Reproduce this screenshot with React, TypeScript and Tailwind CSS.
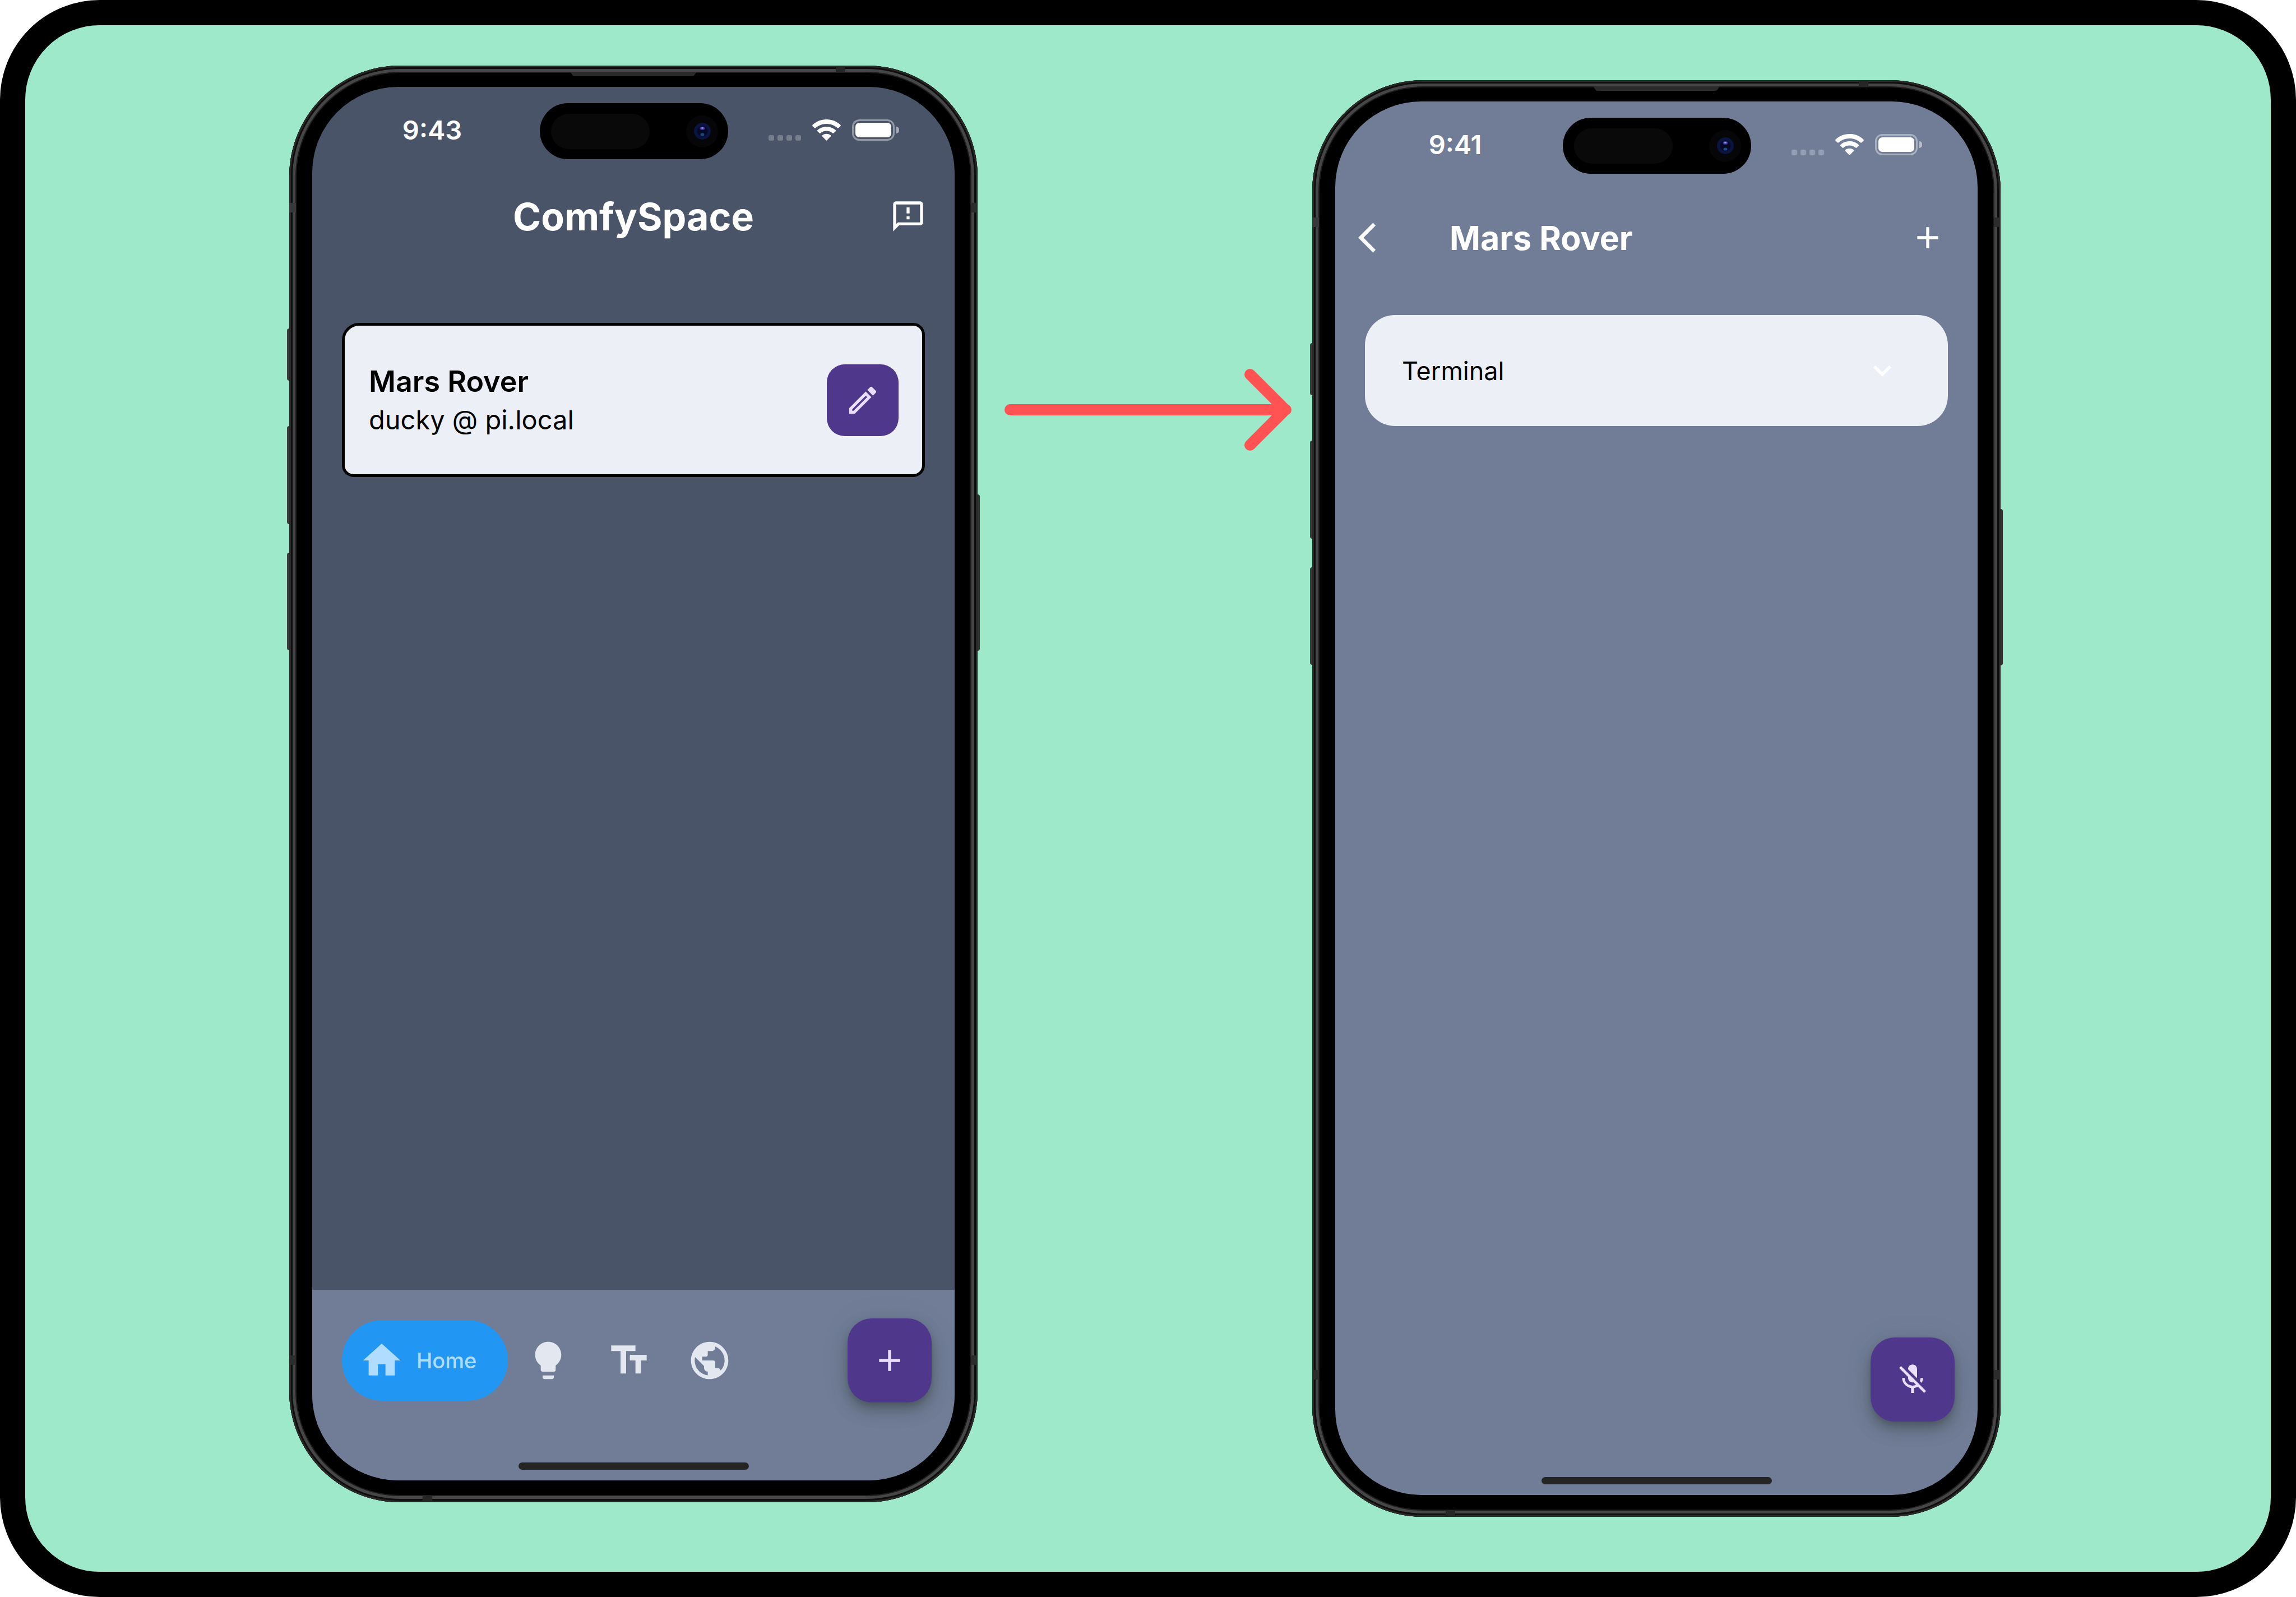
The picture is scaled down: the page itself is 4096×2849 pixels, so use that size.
import type { ReactNode } from "react";
import {
  MdAdd,
  MdArrowBackIos,
  MdExpandMore,
  MdHome,
  MdLightbulb,
  MdMicOff,
  MdOutlineEdit,
  MdOutlineFeedback,
  MdPublic,
  MdTextFields,
} from "react-icons/md";

function StatusBar({ time }: { time: string }) {
  return (
    <div className="grid h-[158px] shrink-0 grid-cols-[406fr_336fr_404fr] items-center">
      <span className="pb-1.5 pl-[22px] text-center text-[47px] leading-none font-semibold">{time}</span>
      <div className="flex h-[100px] items-center justify-between rounded-full bg-black pr-[18px] pl-5">
        <span className="h-[63px] w-[176px] rounded-full bg-[#090909]" />
        <span className="flex size-[57px] items-center justify-center rounded-full bg-[#060507]">
          <svg viewBox="0 0 30 30" className="size-[30px]" aria-hidden="true">
            <circle cx="15" cy="15" r="15" fill="#0a1440" />
            <circle cx="15" cy="15" r="9.5" fill="#060828" />
            <ellipse cx="15" cy="10" rx="4.5" ry="3" fill="#3a3698" />
            <ellipse cx="15" cy="9.5" rx="2.2" ry="1.4" fill="#8d89d8" />
            <ellipse cx="15" cy="21" rx="3.5" ry="2.6" fill="#174a80" />
          </svg>
        </span>
      </div>
      <div className="flex items-end justify-end gap-5 pr-[99px] pb-1">
        <span className="flex gap-1.5">
          <i className="size-2.5 rounded-[3px] bg-white/25" />
          <i className="size-2.5 rounded-[3px] bg-white/25" />
          <i className="size-2.5 rounded-[3px] bg-white/25" />
          <i className="size-2.5 rounded-[3px] bg-white/25" />
        </span>
        <svg viewBox="0 0 51 38" className="h-[38px] w-[51px]" fill="#fff" aria-hidden="true">
          <path d="M25.5 0C35.2 0 44 3.700 50.300 9.700C51 10.400 51 11.300 50.400 12L47 15.300C46.400 15.900 45.600 15.900 45 15.300C39.900 10.600 33 7.900 25.500 7.900S11.100 10.600 6 15.300C5.400 15.900 4.600 15.900 4 15.300L.6 12C0 11.300 0 10.400 .7 9.700C7 3.700 15.800 0 25.500 0Z" />
          <path d="M25.500 12.900C31.700 12.900 37.300 15.200 41.500 19C42.200 19.700 42.200 20.500 41.600 21.200L38.200 24.500C37.600 25.100 36.800 25.100 36.200 24.600C33.400 22.100 29.600 20.600 25.500 20.600S17.600 22.100 14.800 24.600C14.200 25.100 13.400 25.100 12.800 24.500L9.400 21.200C8.800 20.500 8.800 19.700 9.500 19C13.700 15.200 19.300 12.900 25.500 12.900Z" />
          <path d="M25.500 25.700C28.400 25.700 31 26.700 33 28.300C33.700 28.900 33.700 29.700 33.100 30.300L26.500 37.100C25.900 37.800 25.100 37.800 24.500 37.100L17.900 30.300C17.300 29.700 17.300 28.900 18 28.300C20 26.700 22.600 25.700 25.500 25.700Z" />
        </svg>
        <span className="flex items-center gap-[3px]">
          <span className="h-[38px] w-[76px] rounded-[13px] border-[3px] border-white/40 p-[3px]">
            <span className="block h-full rounded-[7px] bg-white" />
          </span>
          <span className="h-3 w-[5px] rounded-r-full bg-white/50" />
        </span>
      </div>
    </div>
  );
}

function HomeIndicator() {
  return <div className="mx-auto mb-[19px] h-[13px] w-[411px] shrink-0 rounded-full bg-[#252525]" />;
}

function Phone({ className, children }: { className: string; children: ReactNode }) {
  return (
    <section
      className={`relative flex aspect-[1228/2563] w-full flex-col rounded-[198px] bg-black px-[41px] pt-[38px] pb-[39px] shadow-[inset_0_0_0_3px_#29292a,inset_0_0_0_6px_#0e0e0f,inset_0_0_0_11px_#464648,inset_0_0_0_13px_#1c1c1c] ${className}`}
    >
      <span className="absolute top-[469px] -left-1 h-[93px] w-1 rounded-l-full bg-[#3c3c3e]" />
      <span className="absolute top-[643px] -left-1 h-[175px] w-1 rounded-l-full bg-[#3c3c3e]" />
      <span className="absolute top-[869px] -left-1 h-[174px] w-1 rounded-l-full bg-[#3c3c3e]" />
      <span className="absolute top-[765px] -right-1 h-[279px] w-1 rounded-r-full bg-[#333334]" />
      <svg
        viewBox="0 0 226 8"
        className="absolute top-[11px] left-1/2 h-2 w-[226px] -translate-x-1/2"
        aria-hidden="true"
      >
        <path d="M0 0H226L221 7Q220 8 218 8H8Q6 8 5 7Z" fill="#2a2a2b" />
      </svg>
      <span className="absolute top-0 right-[236px] h-3 w-[17px] bg-[#262627]" />
      <span className="absolute bottom-0 left-[238px] h-3 w-[17px] bg-[#262627]" />
      <span className="absolute top-[245px] left-0 h-[17px] w-3 bg-[#38383a]" />
      <span className="absolute top-[245px] right-0 h-[17px] w-3 bg-[#2c2c2d]" />
      <span className="absolute bottom-[245px] left-0 h-[17px] w-3 bg-[#2c2c2d]" />
      <span className="absolute right-0 bottom-[245px] h-[17px] w-3 bg-[#2c2c2d]" />
      {children}
    </section>
  );
}

function ProjectsScreen() {
  return (
    <div className="flex flex-1 flex-col overflow-hidden rounded-[153px] bg-[#4a5468] text-white">
      <StatusBar time="9:43" />
      <header className="grid h-[146px] shrink-0 grid-cols-[1fr_auto_1fr] items-center px-[51px]">
        <h1 className="col-start-2 text-[68px] leading-none font-bold">ComfySpace</h1>
        <button type="button" aria-label="Feedback" className="justify-self-end">
          <MdOutlineFeedback className="size-16" />
        </button>
      </header>
      <main className="flex-1 px-[53px] pt-[117px]">
        <article className="flex h-[275px] items-center justify-between rounded-[21px] rounded-tl-[31px] border-[5px] border-black bg-[#edeff7] pr-[42px] pl-[43px] text-black">
          <div>
            <h2 className="text-[52px] leading-[70px] font-semibold">Mars Rover</h2>
            <p className="text-[47px] leading-[66px]">ducky @ pi.local</p>
          </div>
          <button
            type="button"
            aria-label="Edit Mars Rover"
            className="flex size-32 items-center justify-center rounded-[32px] bg-[#4f378b] text-[#eaddff]"
          >
            <MdOutlineEdit className="size-16" />
          </button>
        </article>
      </main>
      <footer className="flex h-[340px] shrink-0 flex-col justify-between bg-[#717d97]">
        <div className="flex items-center justify-between pt-[51px] pr-[41px] pl-[53px]">
          <nav className="flex items-center">
            <button
              type="button"
              aria-current="page"
              className="flex h-36 w-[296px] items-center gap-[22px] rounded-full bg-[#2296f3] pl-[31px] text-[#b0ddff]"
            >
              <MdHome className="size-20" />
              <span className="text-[38px] leading-none font-medium">Home</span>
            </button>
            <button type="button" aria-label="Ideas" className="flex size-36 items-center justify-center text-[#e2e7f0]">
              <MdLightbulb className="size-20" />
            </button>
            <button type="button" aria-label="Text" className="flex size-36 items-center justify-center text-[#e2e7f0]">
              <MdTextFields className="size-20" />
            </button>
            <button type="button" aria-label="Web" className="flex size-36 items-center justify-center text-[#e2e7f0]">
              <MdPublic className="size-20" />
            </button>
          </nav>
          <button
            type="button"
            aria-label="Add project"
            className="flex size-[150px] items-center justify-center rounded-[43px] bg-[#4f378b] text-[#eaddff] shadow-[0_8px_13px_-3px_#3f4a4d88,0_16px_27px_0_#3f4a4d66,0_3px_48px_0_#3f4a4d22]"
          >
            <MdAdd className="size-16" />
          </button>
        </div>
        <HomeIndicator />
      </footer>
    </div>
  );
}

function ProjectScreen() {
  return (
    <div className="flex flex-1 flex-col overflow-hidden rounded-[153px] bg-[#717d97] text-white">
      <StatusBar time="9:41" />
      <header className="flex h-[170px] shrink-0 items-center pr-[57px] pl-[41px]">
        <button type="button" aria-label="Back" className="w-[163px]">
          <MdArrowBackIos className="size-16" />
        </button>
        <h1 className="flex-1 text-[59px] leading-none font-bold">Mars Rover</h1>
        <button type="button" aria-label="Add widget">
          <MdAdd className="size-16" />
        </button>
      </header>
      <main className="flex-1 px-[53px] pt-[53px]">
        <button
          type="button"
          aria-expanded="false"
          className="flex h-[198px] w-full items-center justify-between rounded-[54px] bg-[#edeff7] pr-[85px] pl-[66px] text-[45px] leading-none text-black"
        >
          Terminal
          <MdExpandMore className="size-16 text-white" />
        </button>
      </main>
      <div className="flex justify-end pr-[41px] pb-[99px]">
        <button
          type="button"
          aria-label="Unmute microphone"
          className="flex size-[150px] items-center justify-center rounded-[43px] bg-[#4f378b] text-[#eaddff] shadow-[0_8px_13px_-3px_#3f4a4d88,0_16px_27px_0_#3f4a4d66,0_3px_48px_0_#3f4a4d22]"
        >
          <MdMicOff className="size-16" />
        </button>
      </div>
      <HomeIndicator />
    </div>
  );
}

export default function App() {
  return (
    <div className="bg-white font-['Inter',sans-serif]">
      <div className="grid min-h-screen grid-cols-[471fr_1228fr_597fr_1228fr_482fr] items-start rounded-[178px] border-[45px] border-black bg-[#9ee9ca]">
        <Phone className="col-start-2 mt-[72px]">
          <ProjectsScreen />
        </Phone>
        <svg
          viewBox="0 0 597 146"
          className="mt-[613px] w-full"
          fill="none"
          stroke="#ff5353"
          strokeWidth="20"
          strokeLinecap="round"
          strokeLinejoin="round"
          role="img"
          aria-label="Opens"
        >
          <path d="M58 73H550M486 10L549 73L486 136" />
        </svg>
        <Phone className="mt-[98px]">
          <ProjectScreen />
        </Phone>
      </div>
    </div>
  );
}
